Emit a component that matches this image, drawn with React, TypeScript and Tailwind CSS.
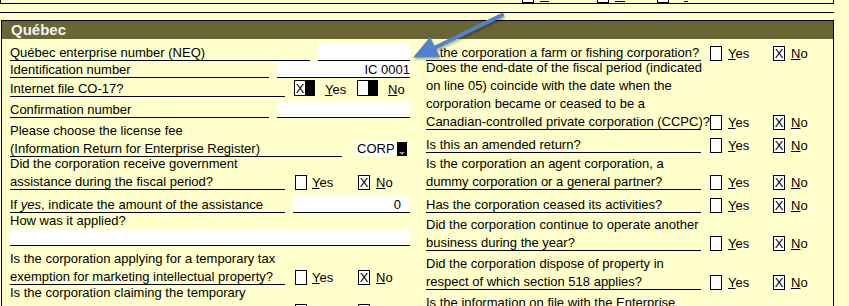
import type { ReactNode } from "react";

function Check({ x, className = "" }: { x?: boolean; className?: string }) {
  return (
    <div
      className={`w-[12px] h-[15px] shrink-0 border border-black bg-white flex items-center justify-center text-[13px] leading-none ${className}`}
    >
      {x ? "X" : ""}
    </div>
  );
}

function Label({ w, children }: { w: string; children: ReactNode }) {
  return (
    <div className={`${w} shrink-0 border-b border-black`}>
      <div className="leading-[18px] -mb-[2px] whitespace-nowrap">{children}</div>
    </div>
  );
}

function YesNo({ side }: { side: "left" | "right" }) {
  const left = side === "left";
  return (
    <>
      <Check className={left ? "ml-[10px]" : "ml-[9px]"} />
      <span className={`leading-[18px] -mb-[2px] ${left ? "ml-[5px] w-[46px]" : "ml-[6px] w-[45px]"}`}>
        <u>Y</u>es
      </span>
      <Check x />
      <span className="ml-[6px] leading-[18px] -mb-[2px]">
        <u>N</u>o
      </span>
    </>
  );
}

export default function App() {
  return (
    <div className="relative w-[849px] h-[306px] overflow-hidden bg-[#ffffcc] text-[13px] text-black font-['Liberation_Sans',Arial,sans-serif]">
      {/* bottom of the previous block */}
      <div className="flex items-start h-[4px] w-[834px] border-x border-b border-black">
        <div className="ml-[521px] w-[12px] h-[3px] border-x border-b border-black bg-white" />
        <div className="ml-[6px] mt-[1px] w-[9px] h-px bg-black" />
        <div className="ml-[48px] w-[12px] h-[3px] border-x border-b border-black bg-white" />
        <div className="ml-[6px] mt-[1px] w-[10px] h-px bg-black" />
        <div className="ml-[32px] w-[12px] h-[3px] border-x border-b border-black bg-white" />
        <div className="ml-[15px] mt-[1px] w-[4px] h-px bg-black" />
      </div>
      <div className="mt-[8px] h-px w-[834px] bg-black" />

      <div className="mt-[7px] ml-px w-[833px] h-[300px] border-x border-t border-black">
        <div className="h-[18px] bg-[#696534] pl-[9px] text-[15px] font-bold leading-[18px] text-[#f4f4f4]">
          Québec
        </div>

        <div className="flex pl-[8px]">
          {/* left column */}
          <div className="w-[400px] shrink-0">
            <div className="flex items-end h-[22px]">
              <Label w="w-[300px]">Québec enterprise number (NEQ)</Label>
              <div className="ml-[8px] w-[92px] h-[18px] bg-white border-b border-black" />
            </div>
            <div className="flex items-end h-[17px]">
              <Label w="w-[259px]">Identification number</Label>
              <div className="ml-[8px] w-[133px] h-[16px] bg-white border-b border-black flex items-end justify-end">
                <div className="leading-[18px] -mb-[2px]">IC 0001</div>
              </div>
            </div>
            <div className="flex items-end h-[19px]">
              <Label w="w-[275px]">Internet file CO-17?</Label>
              <div className="ml-[9px] mb-px flex h-[16px]">
                <div className="w-[12px] border border-black bg-white flex items-center justify-center leading-none">X</div>
                <div className="w-[9px] bg-black" />
              </div>
              <span className="ml-[10px] w-[32px] leading-[18px] -mb-[2px]">
                <u>Y</u>es
              </span>
              <div className="mb-px flex h-[16px]">
                <div className="w-[12px] border border-black bg-white" />
                <div className="w-[9px] bg-black" />
              </div>
              <span className="ml-[10px] leading-[18px] -mb-[2px]">
                <u>N</u>o
              </span>
            </div>
            <div className="flex items-end h-[21px]">
              <Label w="w-[259px]">Confirmation number</Label>
              <div className="ml-[8px] w-[133px] h-[17px] bg-white border-b border-black" />
            </div>
            <div className="flex items-end h-[39px]">
              <Label w="w-[332px]">
                Please choose the license fee
                <br />
                (Information Return for Enterprise Register)
              </Label>
              <div className="ml-[14px] mb-px flex h-[14px]">
                <div className="w-[41px] bg-white pl-px leading-[14px] overflow-hidden">CORP</div>
                <div className="relative w-[10px] bg-black">
                  <svg className="absolute left-[2px] bottom-[1px]" width="6" height="3" viewBox="0 0 6 3">
                    <polygon points="0,0 6,0 3,3" fill="#9a9a9a" />
                  </svg>
                </div>
              </div>
            </div>
            <div className="flex items-end h-[33px]">
              <Label w="w-[275px]">
                Did the corporation receive government
                <br />
                assistance during the fiscal period?
              </Label>
              <YesNo side="left" />
            </div>
            <div className="flex items-end h-[23px]">
              <Label w="w-[275px]">
                If <i>yes</i>, indicate the amount of the assistance
              </Label>
              <div className="ml-[8px] w-[117px] h-[18px] bg-white border-b border-black flex items-end justify-end pr-[9px]">
                <div className="leading-[18px] -mb-[2px]">0</div>
              </div>
            </div>
            <div className="flex flex-col justify-end h-[33px]">
              <div className="leading-[16px]">How was it applied?</div>
              <div className="h-[17px] w-[400px] bg-white border-b border-black" />
            </div>
            <div className="flex items-end h-[39px]">
              <Label w="w-[275px]">
                Is the corporation applying for a temporary tax
                <br />
                exemption for marketing intellectual property?
              </Label>
              <YesNo side="left" />
            </div>
            <div className="flex items-end h-[34px]">
              <Label w="w-[275px]">
                Is the corporation claiming the temporary
                <br />
                tax holiday for foreign researchers?
              </Label>
              <YesNo side="left" />
            </div>
          </div>

          {/* right column */}
          <div className="ml-[16px] w-[400px] shrink-0">
            <div className="flex items-end h-[22px]">
              <Label w="w-[275px]">Is the corporation a farm or fishing corporation?</Label>
              <YesNo side="right" />
            </div>
            <div className="flex items-end h-[69px]">
              <Label w="w-[275px]">
                Does the end-date of the fiscal period (indicated
                <br />
                on line 05) coincide with the date when the
                <br />
                corporation became or ceased to be a
                <br />
                Canadian-controlled private corporation (CCPC)?
              </Label>
              <YesNo side="right" />
            </div>
            <div className="flex items-end h-[23px]">
              <Label w="w-[275px]">Is this an amended return?</Label>
              <YesNo side="right" />
            </div>
            <div className="flex items-end h-[37px]">
              <Label w="w-[275px]">
                Is the corporation an agent corporation, a
                <br />
                dummy corporation or a general partner?
              </Label>
              <YesNo side="right" />
            </div>
            <div className="flex items-end h-[23px]">
              <Label w="w-[275px]">Has the corporation ceased its activities?</Label>
              <YesNo side="right" />
            </div>
            <div className="flex items-end h-[38px]">
              <Label w="w-[275px]">
                Did the corporation continue to operate another
                <br />
                business during the year?
              </Label>
              <YesNo side="right" />
            </div>
            <div className="flex items-end h-[39px]">
              <Label w="w-[275px]">
                Did the corporation dispose of property in
                <br />
                respect of which section 518 applies?
              </Label>
              <YesNo side="right" />
            </div>
            <div className="flex items-end h-[39px]">
              <Label w="w-[275px]">
                Is the information on file with the Enterprise
                <br />
                Register up to date?
              </Label>
              <YesNo side="right" />
            </div>
          </div>
        </div>
      </div>

      {/* callout arrow */}
      <svg
        className="absolute left-0 top-0 pointer-events-none drop-shadow-[1px_2px_1px_rgba(0,0,0,0.3)]"
        width="849"
        height="306"
        viewBox="0 0 849 306"
      >
        <line x1="502" y1="15" x2="432" y2="49" stroke="#4f83cc" strokeWidth="4" strokeLinecap="round" />
        <polygon points="413,57.5 430,37 440,57" fill="#4f83cc" />
      </svg>
    </div>
  );
}
